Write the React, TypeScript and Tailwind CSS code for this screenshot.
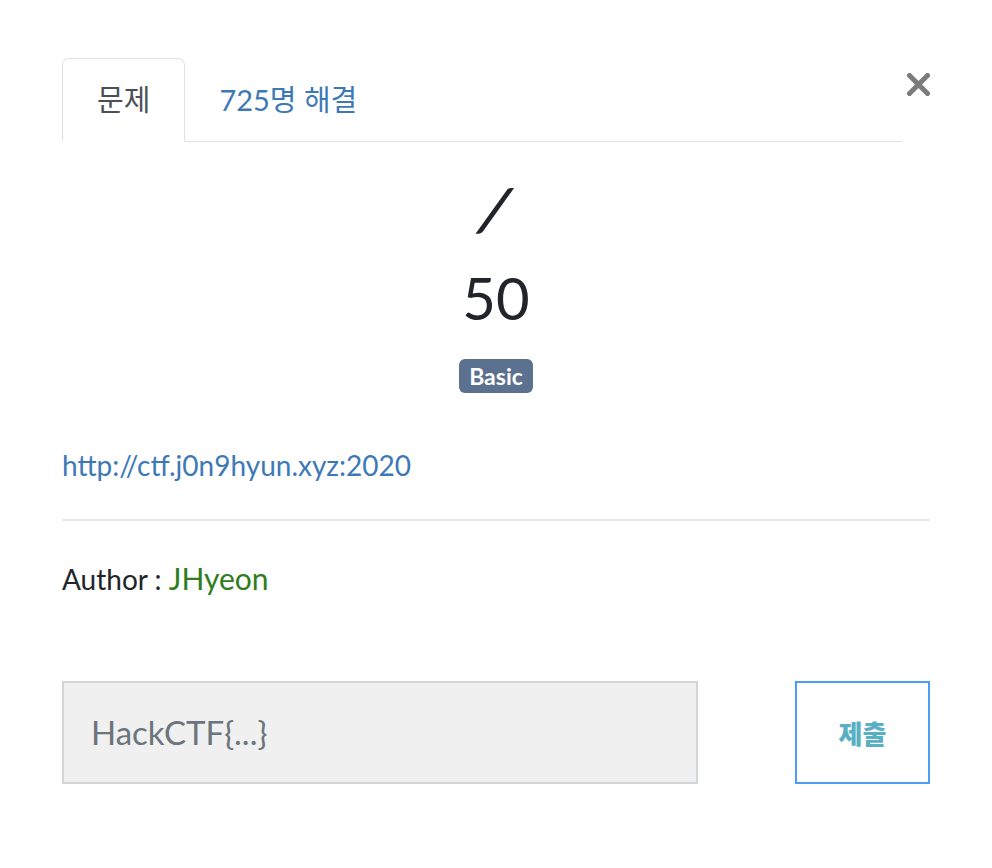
import React from "react";

export default function App() {
  const latin = { fontFamily: "Lato, 'Noto Sans CJK KR', sans-serif" };
  return (
    <div className="w-[992px] h-[868px] bg-white px-[62px] pt-[58px]" style={latin}>
      <div className="flex items-start">
        <ul className="flex flex-1 border-b border-[#dee2e6] h-[84px]">
          <li className="-mb-px h-[84px] flex items-center px-[34px] border border-[#dee2e6] border-b-white bg-white rounded-t-[7px] text-[29px] text-[#495057]">
            문제
          </li>
          <li className="h-[84px] flex items-center px-[34px] text-[29px] text-[#3d79b6]">
            725명 해결
          </li>
        </ul>
        <div className="w-[28px] flex justify-end pt-[15px]">
          <svg width="23" height="23" viewBox="0 0 23 23">
            <path d="M2.5 2.5 L20.5 20.5 M20.5 2.5 L2.5 20.5" stroke="#7b7b7b" strokeWidth="5" strokeLinecap="square" />
          </svg>
        </div>
      </div>

      <div className="flex flex-col items-center">
        <div className="mt-[32px] text-[58px] leading-[70px] font-bold text-[#212529] -skew-x-[18deg]">/</div>
        <div className="mt-[19px] text-[58px] leading-[70px] text-[#212529]">50</div>
        <div className="mt-[26px] h-[34px] px-[10px] rounded-[6px] bg-[#5c7190] text-white font-bold text-[23px] leading-[34px]">
          Basic
        </div>
      </div>

      <div className="mt-[51px] text-[28px] leading-[42px] text-[#3d79b6]">http://ctf.j0n9hyun.xyz:2020</div>
      <div className="mt-[33px] h-[2px] bg-[#e6e6e6]" />
      <div className="mt-[36px] h-[42px] text-[28px] leading-[42px] text-[#212529]">
        Author : <span className="text-[30px] leading-[42px] text-[#2f7d1e]">JHyeon</span>
      </div>

      <div className="mt-[82px] flex justify-between">
        <div className="w-[636px] h-[103px] bg-[#f0f0f0] border-2 border-[#d3d6d9] flex items-center pl-[27px] text-[33px] text-[#6c757d]">
          HackCTF{"{...}"}
        </div>
        <div className="w-[135px] h-[103px] border-2 border-[#4c9df5] flex items-center justify-center font-black text-[26px] text-[#5ab0c3]" style={{ fontFamily: "'Noto Sans CJK KR', sans-serif" }}>
          제출
        </div>
      </div>
    </div>
  );
}
